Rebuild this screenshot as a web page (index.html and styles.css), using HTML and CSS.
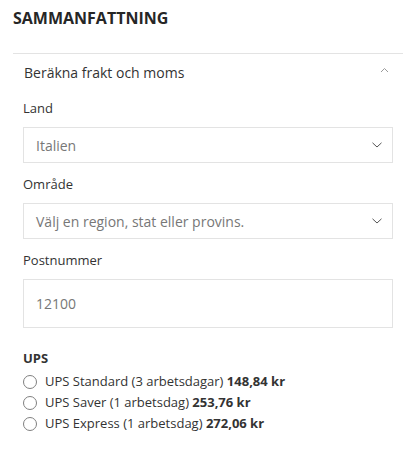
FILE: index.html
```html
<!DOCTYPE html>
<html>
<head>
  <meta charset="utf-8">
  <meta name="viewport" content="width=device-width, initial-scale=1">
  <title>Sammanfattning</title>
  <link rel="stylesheet" href="styles.css">
</head>
<body>

  <div id="summary">
    <h2 class="summary-title">Sammanfattning</h2>

    <div class="block">
      <div class="block-title">
        <span>Beräkna frakt och moms</span>
        <svg class="toggle" width="9" height="6" viewBox="0 0 9 6">
          <polyline points="1,5 4.5,1.5 8,5" fill="none" stroke="#9a9a9a" stroke-width="1"/>
        </svg>
      </div>

      <div class="block-content">
        <label class="label">Land</label>
        <div class="field select">
          <span>Italien</span>
          <svg width="10" height="6" viewBox="0 0 10 6">
            <polyline points="0.5,0.8 5,5 9.5,0.8" fill="none" stroke="#555" stroke-width="1"/>
          </svg>
        </div>

        <label class="label">Område</label>
        <div class="field select">
          <span>Välj en region, stat eller provins.</span>
          <svg width="10" height="6" viewBox="0 0 10 6">
            <polyline points="0.5,0.8 5,5 9.5,0.8" fill="none" stroke="#555" stroke-width="1"/>
          </svg>
        </div>

        <label class="label" for="postnummer">Postnummer</label>
        <input class="field input" type="text" id="postnummer" value="12100">

        <div class="carrier">UPS</div>
        <!-- fraktalternativ -->
        <div class="rate"><span class="radio"></span><span>UPS Standard (3 arbetsdagar) <b>148,84 kr</b></span></div>
        <div class="rate"><span class="radio"></span><span>UPS Saver (1 arbetsdag) <b>253,76 kr</b></span></div>
        <div class="rate"><span class="radio"></span><span>UPS Express (1 arbetsdag) <b>272,06 kr</b></span></div>
      </div>
    </div>
  </div>

</body>
</html>
```

FILE: styles.css
```css
body {
  background: #ffffff;
  color: #333333;
  font-family: "Open Sans", Arial, sans-serif;
  margin: 0;
  padding: 0;
}
#summary {
  padding: 0 3px 0 13px;
}
.summary-title {
  font-size: 16px;
  font-weight: bold;
  text-transform: uppercase;
  line-height: 20px;
  margin: 0;
  padding: 8px 0 25px;
  color: #262626;
}
.block {
  border-top: 1px solid #e3e3e3;
}
.block-title {
  display: flex;
  justify-content: space-between;
  align-items: center;
  font-size: 14px;
  line-height: 20px;
  padding: 9px 14px 0 11px;
}
.toggle {
  margin-top: -6px;
}
.block-content {
  display: flex;
  flex-direction: column;
  padding: 16px 10px 0 10px;
}
.label {
  font-size: 13px;
  line-height: 18px;
  margin-bottom: 10px;
}
.field {
  box-sizing: border-box;
  width: 100%;
  border: 1px solid #e3e3e3;
  background: #fff;
  color: #777777;
  font-family: inherit;
  font-size: 14px;
  margin: 0 0 12px;
}
.select {
  height: 36px;
  display: flex;
  align-items: center;
  justify-content: space-between;
  padding: 0 10px 0 12px;
}
.input {
  height: 49px;
  padding: 0 12px;
  margin-bottom: 21px;
  outline: none;
}
.carrier {
  font-size: 13px;
  font-weight: bold;
  line-height: 18px;
  margin-bottom: 4px;
}
.rate {
  display: flex;
  align-items: center;
  gap: 8px;
  font-size: 13px;
  line-height: 21px;
}
.rate b {
  font-weight: bold;
}
.radio {
  box-sizing: border-box;
  width: 14px;
  height: 14px;
  border: 1px solid #808080;
  border-radius: 50%;
}
```
